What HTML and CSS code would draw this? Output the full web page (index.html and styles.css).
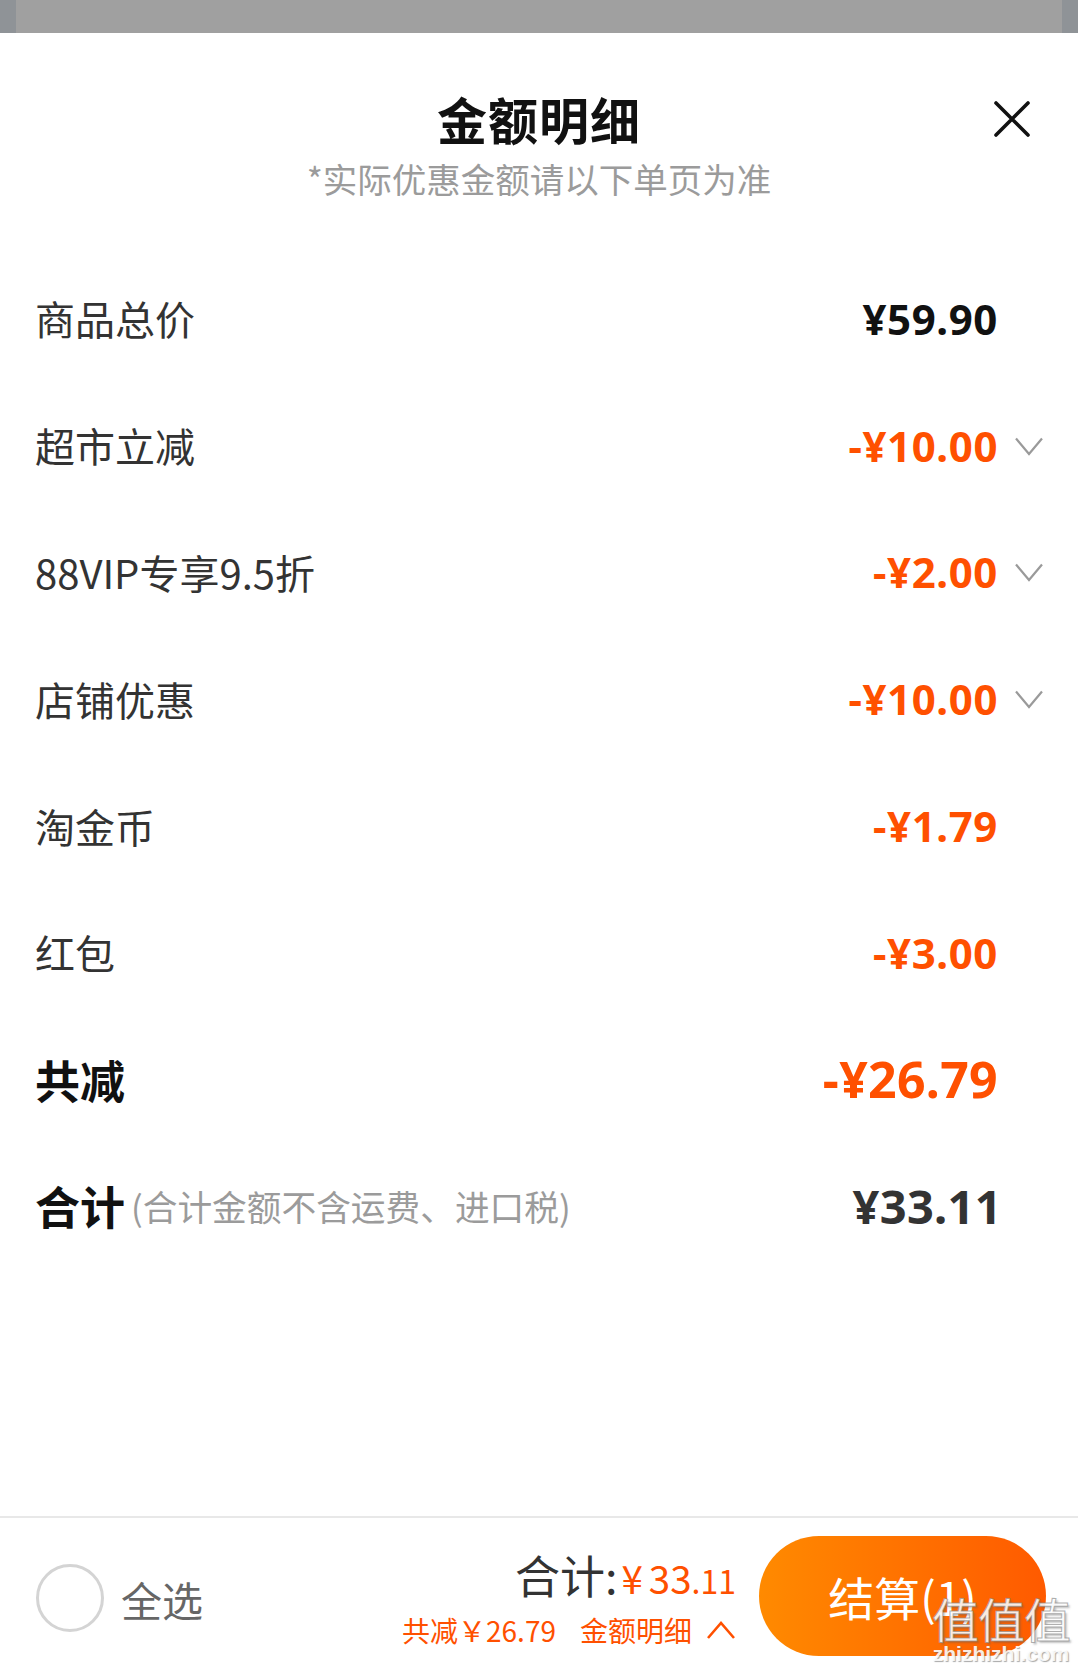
FILE: index.html
```html
<!DOCTYPE html>
<html lang="zh-CN">
<head>
<meta charset="utf-8">
<title>金额明细</title>
<link rel="stylesheet" href="styles.css">
</head>
<body>
<div class="page">
  <div class="topbar"></div>
  <div class="sheet">
    <div class="header">
      <h1 class="title">金额明细</h1>
      <button class="close" aria-label="关闭">
        <svg width="36" height="36" viewBox="0 0 36 36"><path d="M2 2 L34 34 M34 2 L2 34" stroke="#111" stroke-width="3.6" stroke-linecap="round" fill="none"/></svg>
      </button>
      <p class="subtitle">*实际优惠金额请以下单页为准</p>
    </div>
    <div class="list">
      <div class="row">
        <span class="label">商品总价</span>
        <span class="amount dark">¥59.90</span>
        <span class="arrow"></span>
      </div>
      <div class="row">
        <span class="label">超市立减</span>
        <span class="amount orange">-¥10.00</span>
        <span class="arrow"><svg width="28" height="19" viewBox="0 0 28 19"><path d="M1 1.5 L14 17 L27 1.5" stroke="#9a9a9a" stroke-width="2.2" fill="none"/></svg></span>
      </div>
      <div class="row">
        <span class="label">88VIP专享9.5折</span>
        <span class="amount orange">-¥2.00</span>
        <span class="arrow"><svg width="28" height="19" viewBox="0 0 28 19"><path d="M1 1.5 L14 17 L27 1.5" stroke="#9a9a9a" stroke-width="2.2" fill="none"/></svg></span>
      </div>
      <div class="row">
        <span class="label">店铺优惠</span>
        <span class="amount orange">-¥10.00</span>
        <span class="arrow"><svg width="28" height="19" viewBox="0 0 28 19"><path d="M1 1.5 L14 17 L27 1.5" stroke="#9a9a9a" stroke-width="2.2" fill="none"/></svg></span>
      </div>
      <div class="row">
        <span class="label">淘金币</span>
        <span class="amount orange">-¥1.79</span>
        <span class="arrow"></span>
      </div>
      <div class="row">
        <span class="label">红包</span>
        <span class="amount orange">-¥3.00</span>
        <span class="arrow"></span>
      </div>
      <div class="row">
        <span class="label strong">共减</span>
        <span class="amount big orange">-¥26.79</span>
        <span class="arrow"></span>
      </div>
      <div class="row">
        <span class="label strong">合计<span class="note">(合计金额不含运费、进口税)</span></span>
        <span class="amount big gray total">¥33.11</span>
        <span class="arrow"></span>
      </div>
    </div>
  </div>
  <div class="bottombar">
    <div class="selectall">
      <span class="radio"></span>
      <span class="selectall-text">全选</span>
    </div>
    <div class="summary">
      <div class="sum-line"><span class="sum-label">合计:</span><span class="sum-price"><span class="yen">¥</span>33<span class="dec">.11</span></span></div>
      <div class="sub-line"><span>共减￥26.79</span><span class="detail">金额明细<svg width="30" height="20" viewBox="0 0 30 20"><path d="M2 18 L15 3 L28 18" stroke="#ff5000" stroke-width="2.6" fill="none"/></svg></span></div>
    </div>
    <button class="checkout">结算(1)</button>
    <div class="watermark"><span class="wm-logo">值值值</span><span class="wm-site">zhizhizhi.com</span></div>
  </div>
</div>
</body>
</html>
```

FILE: styles.css
```css
* { box-sizing: border-box; }
html, body { margin: 0; padding: 0; }
body {
  width: 1078px;
  height: 1677px;
  overflow: hidden;
  background: #fff;
  font-family: "Noto Sans CJK SC", "Noto Sans", sans-serif;
  color: #333;
}
.page {
  height: 1677px;
  display: flex;
  flex-direction: column;
}
.topbar {
  height: 33px;
  flex: none;
  background: linear-gradient(to right, #8f9397 0, #8f9397 16px, #a0a0a0 16px, #a0a0a0 1062px, #8f9397 1062px);
}
.sheet {
  flex: 1;
}
.header {
  display: grid;
  grid-template-columns: 1fr auto 1fr;
  padding: 55px 48px 0 48px;
}
.title {
  grid-column: 2;
  margin: 0;
  font-size: 50px;
  line-height: 60px;
  font-weight: 700;
  color: #111;
  letter-spacing: 1px;
}
.close {
  grid-column: 3;
  justify-self: end;
  align-self: center;
  border: 0;
  background: none;
  padding: 0;
  width: 36px;
  height: 36px;
  display: flex;
  margin-top: 2px;
}
.subtitle {
  grid-column: 1 / 4;
  margin: 8px 0 0;
  text-align: center;
  font-size: 34.5px;
  line-height: 44px;
  color: #9b9b9b;
}
.list {
  margin-top: 55px;
}
.row {
  height: 126.8px;
  display: flex;
  align-items: center;
  padding: 0 35px 0 35px;
}
.label {
  flex: 1;
  font-size: 40px;
  color: #333;
  display: flex;
  align-items: center;
}
.label.strong {
  font-size: 45px;
  font-weight: 700;
  color: #111;
}
.note {
  font-size: 34.7px;
  font-weight: 400;
  color: #9b9b9b;
  margin-left: 6px;
}
.amount {
  font-family: "Noto Sans", "Open Sans", sans-serif;
  font-weight: 700;
  font-size: 42px;
  letter-spacing: 0.6px;
}
.amount.big { font-size: 50px; letter-spacing: 0.3px; }
.amount.total { font-size: 47px; margin-right: -4px; }
.dark { color: #111; }
.gray { color: #333; }
.orange { color: #ff5000; }
.arrow {
  width: 45px;
  display: flex;
  justify-content: flex-end;
  align-items: center;
  padding-top: 2px;
}
.bottombar {
  position: relative;
  height: 161px;
  flex: none;
  border-top: 2px solid #e8e8e8;
  display: flex;
  align-items: center;
  padding: 0 32px 0 36px;
}
.selectall {
  flex: 1;
  display: flex;
  align-items: center;
  gap: 17px;
}
.radio {
  width: 68px;
  height: 68px;
  border-radius: 50%;
  border: 3px solid #d4d4d4;
}
.selectall-text {
  font-size: 41px;
  color: #666;
  margin-top: 2px;
}
.summary {
  display: flex;
  flex-direction: column;
  align-items: flex-end;
  margin-right: 23px;
  margin-top: 2px;
}
.sum-line {
  display: flex;
  align-items: baseline;
  line-height: 56px;
}
.sum-label {
  font-size: 45px;
  color: #333;
}
.sum-price {
  color: #ff5000;
  font-size: 38.5px;
  margin-left: 4px;
}
.sum-price .yen { margin-right: 6px; }
.sum-price .dec { font-size: 32px; }
.sub-line {
  display: flex;
  align-items: center;
  gap: 24px;
  font-size: 28px;
  line-height: 40px;
  color: #ff5000;
  margin-top: 2px;
}
.detail {
  display: flex;
  align-items: center;
  gap: 14px;
}
.checkout {
  width: 287px;
  height: 120px;
  border: 0;
  border-radius: 60px;
  background: linear-gradient(to right, #ff8a00, #ff5a00);
  color: #fff;
  font-family: "Noto Sans CJK SC", sans-serif;
  font-size: 46px;
  padding: 0;
  margin-top: -4px;
}
.watermark {
  position: absolute;
  right: 8px;
  bottom: 12px;
  display: flex;
  flex-direction: column;
  align-items: center;
  pointer-events: none;
}
.wm-logo {
  font-size: 47px;
  line-height: 50px;
  font-weight: 400;
  color: rgba(255, 255, 255, 0.88);
  -webkit-text-stroke: 1px rgba(140, 140, 140, 0.7);
  text-shadow: 2px 2px 2px rgba(90, 90, 90, 0.35);
  letter-spacing: -1px;
}
.wm-site {
  font-family: "Liberation Sans", sans-serif;
  font-size: 21px;
  line-height: 22px;
  font-weight: 700;
  color: rgba(255, 255, 255, 0.9);
  text-shadow: 1px 1px 1px rgba(110, 110, 110, 0.6);
}
```
